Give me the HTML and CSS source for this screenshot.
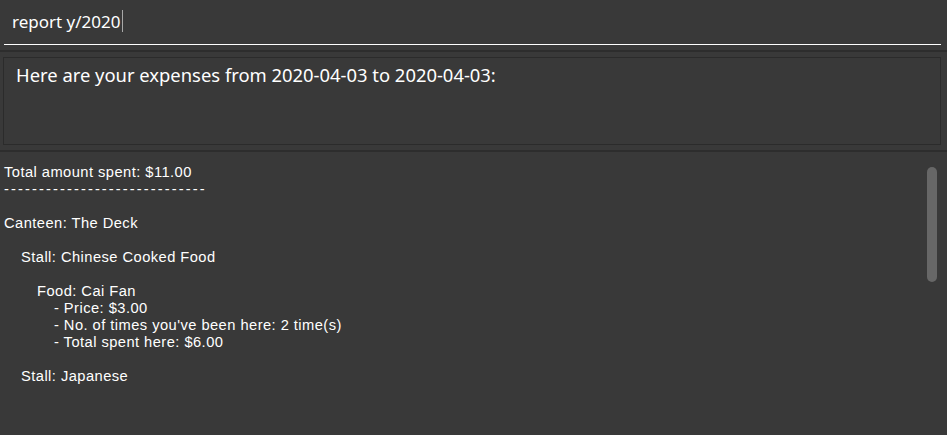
FILE: index.html
```html
<!DOCTYPE html>
<html>
<head>
<meta charset="utf-8">
<link rel="stylesheet" href="styles.css">
</head>
<body>
<div class="app">
  <div class="command-wrap">
    <div class="command-box"><span class="cmd-text">report y/2020</span><span class="caret"></span></div>
  </div>
  <div class="band"></div>
  <div class="result-wrap">
    <div class="result-box">Here are your expenses from 2020-04-03 to 2020-04-03:</div>
  </div>
  <div class="band band2"></div>
  <div class="report">
    <div class="report-text">
      <div class="line">Total amount spent: $11.00</div>
      <div class="line dashes">-----------------------------</div>
      <div class="line blank"></div>
      <div class="line">Canteen: The Deck</div>
      <div class="line blank"></div>
      <div class="line i1">Stall: Chinese Cooked Food</div>
      <div class="line blank"></div>
      <div class="line i2">Food: Cai Fan</div>
      <div class="line i3">- Price: $3.00</div>
      <div class="line i3">- No. of times you've been here: 2 time(s)</div>
      <div class="line i3">- Total spent here: $6.00</div>
      <div class="line blank"></div>
      <div class="line i1">Stall: Japanese</div>
    </div>
    <div class="scrollbar"><div class="thumb"></div></div>
  </div>
</div>
</body>
</html>
```

FILE: styles.css
```css
html, body {
  margin: 0;
  padding: 0;
  background: #393939;
  color: #ffffff;
  font-family: "Noto Sans", "Open Sans", sans-serif;
  overflow: hidden;
}
.app {
  width: 947px;
  height: 435px;
  display: flex;
  flex-direction: column;
}
.command-wrap {
  padding: 0 6px 0 4px;
}
.command-box {
  height: 42px;
  padding-bottom: 2px;
  border-bottom: 1px solid #ffffff;
  display: flex;
  align-items: center;
  padding-left: 8px;
  font-size: 17px;
}
.caret {
  display: inline-block;
  width: 1px;
  height: 22px;
  background: #a8a8a8;
  margin-left: 2px;
}
.band {
  height: 2px;
  background: #2d2d2d;
  margin-top: 5px;
}
.result-wrap {
  padding: 5px 6px 0 3px;
}
.result-box {
  border: 1px solid #2b2b2b;
  padding: 5px 12px 0 12px;
  box-sizing: border-box;
  height: 88px;
  font-size: 18.4px;
  line-height: 24px;
}
.band2 {
  margin-top: 5px;
}
.report {
  flex: 1;
  display: flex;
  padding-top: 11px;
}
.report-text {
  flex: 1;
  padding-left: 4px;
  padding-top: 1px;
  font-family: "Liberation Sans", Arial, sans-serif;
  font-size: 14.7px;
  line-height: 17px;
  letter-spacing: 0.45px;
}
.line { white-space: pre; height: 17px; }
.dashes { letter-spacing: 2.1px; }
.i1 { padding-left: 17px; }
.i2 { padding-left: 33px; }
.i3 { padding-left: 50px; }
.scrollbar {
  width: 10px;
  margin-right: 10px;
  padding-top: 4px;
}
.thumb {
  height: 115px;
  background: #676767;
  border-radius: 5px;
}
```
